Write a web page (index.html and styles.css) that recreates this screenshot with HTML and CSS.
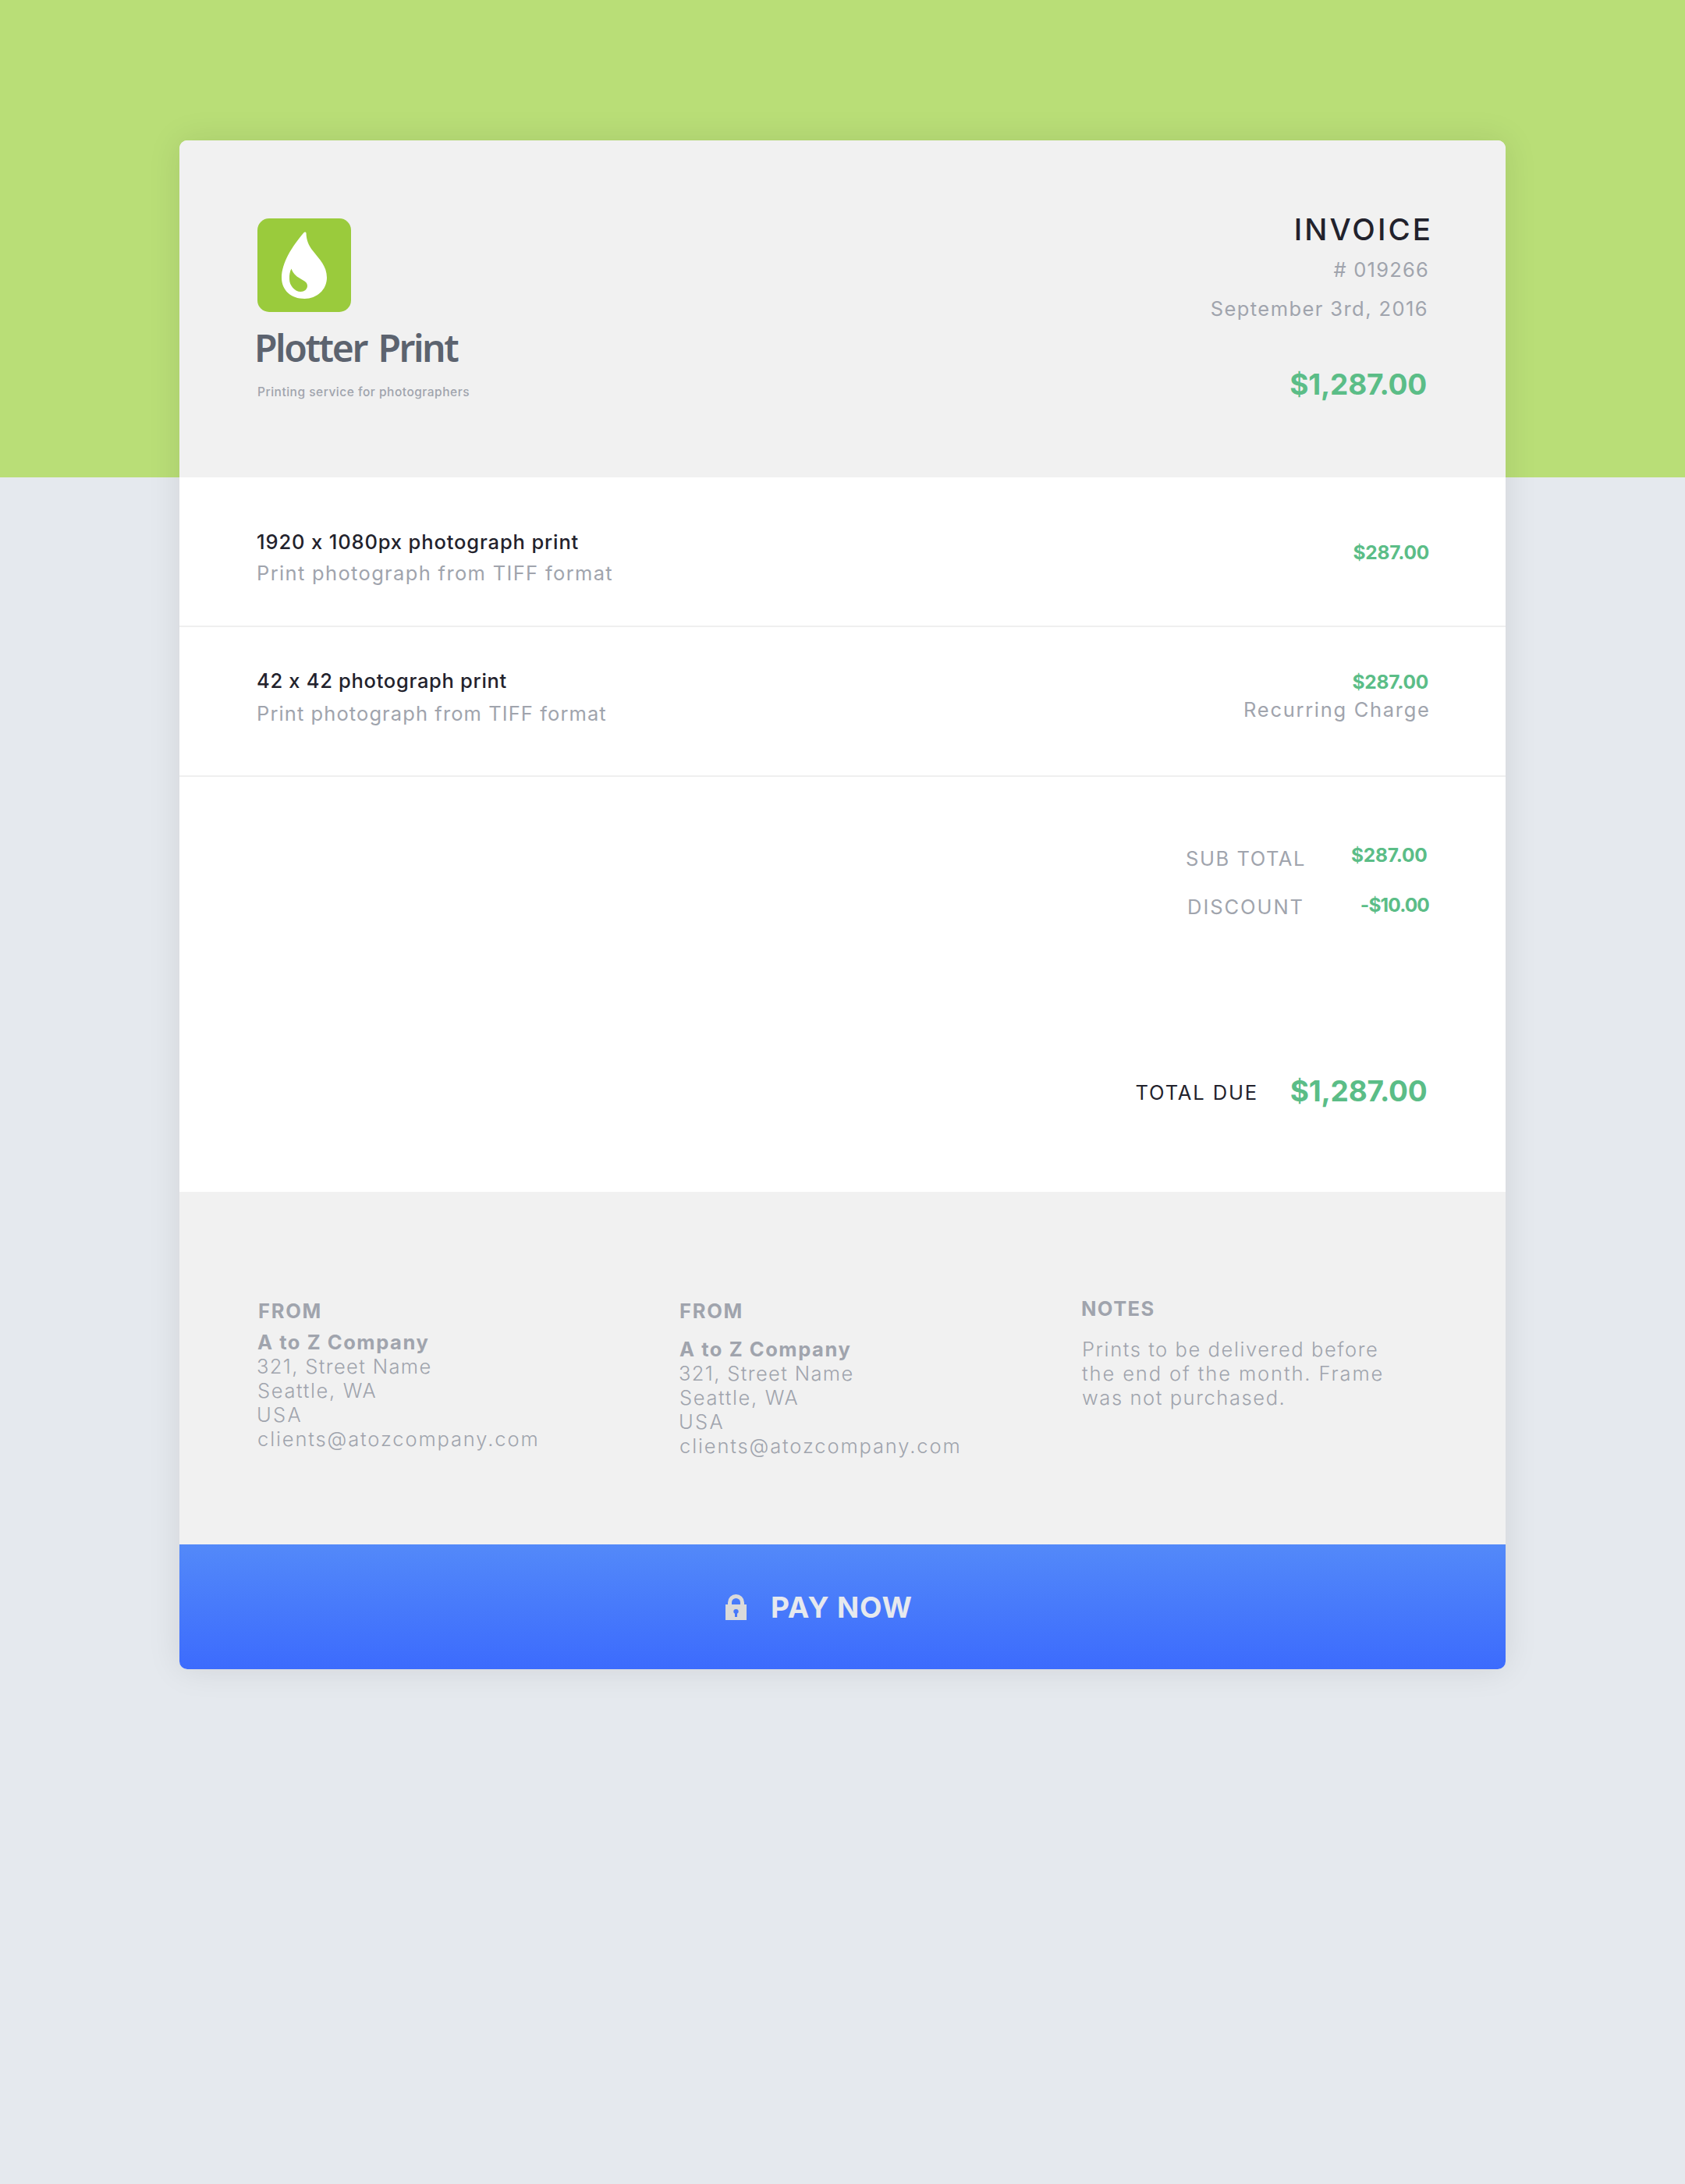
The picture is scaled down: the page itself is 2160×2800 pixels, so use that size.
FILE: index.html
```html
<!DOCTYPE html>
<html lang="en">
<head>
<meta charset="utf-8">
<title>Invoice 019266</title>
<link rel="stylesheet" href="styles.css">
</head>
<body>
<main class="invoice">
  <header class="header">
    <div class="brand">
      <svg class="logo" viewBox="0 0 120 120" aria-hidden="true">
        <rect width="120" height="120" rx="15" fill="#9acb3c"/>
        <path fill="#fff" d="M59.5 18.2C60.5 17 62.4 17.3 62.5 19C62.8 28 65.5 34.500 71 41.500C79.500 52.500 89 61 89 76C89 91.500 76 103 60.500 103C43 103 31 92 31 76C31 57 44.500 35.500 59.500 18.200Z"/>
        <path fill="#9acb3c" d="M43.500 64.500C46 72 51 75 58 79C62.500 81.500 64 83.500 64 86.500C64 91 60 94 55.500 94C48 94 41 86 41 78C40.800 73 41.300 68.500 43.500 64.500Z"/>
      </svg>
      <h1 class="brand-name">Plotter Print</h1>
      <p class="tagline">Printing service for photographers</p>
    </div>
    <div class="meta">
      <h2 class="meta-title">INVOICE</h2>
      <p class="text meta-number"># 019266</p>
      <p class="text meta-date">September 3rd, 2016</p>
      <p class="amount-large meta-amount">$1,287.00</p>
    </div>
  </header>

  <section class="item">
    <div class="item-info">
      <h3 class="item-title">1920 x 1080px photograph print</h3>
      <p class="text item-desc">Print photograph from TIFF format</p>
    </div>
    <div class="item-price item-price-single">
      <p class="amount">$287.00</p>
    </div>
  </section>

  <section class="item item-recurring">
    <div class="item-info">
      <h3 class="item-title">42 x 42 photograph print</h3>
      <p class="text item-desc">Print photograph from TIFF format</p>
    </div>
    <div class="item-price">
      <p class="amount">$287.00</p>
      <p class="text charge">Recurring Charge</p>
    </div>
  </section>

  <section class="totals">
    <div class="total-row subtotal">
      <span class="text total-label">SUB TOTAL</span>
      <span class="amount">$287.00</span>
    </div>
    <div class="total-row discount">
      <span class="text total-label">DISCOUNT</span>
      <span class="amount">-$10.00</span>
    </div>
    <div class="total-row due">
      <span class="text total-label">TOTAL DUE</span>
      <span class="amount-large">$1,287.00</span>
    </div>
  </section>

  <footer class="footer">
    <div class="party">
      <h4 class="heading">FROM</h4>
      <address class="address">
        <strong class="company">A to Z Company</strong>
        <span class="street">321, Street Name</span>
        <span class="city">Seattle, WA</span>
        <span class="country">USA</span>
        <span class="email">clients@atozcompany.com</span>
      </address>
    </div>
    <div class="party party-second">
      <h4 class="heading">FROM</h4>
      <address class="address">
        <strong class="company">A to Z Company</strong>
        <span class="street">321, Street Name</span>
        <span class="city">Seattle, WA</span>
        <span class="country">USA</span>
        <span class="email">clients@atozcompany.com</span>
      </address>
    </div>
    <div class="notes">
      <h4 class="heading">NOTES</h4>
      <p class="notes-text">Prints to be delivered before<br><span class="notes-wide">the end of the month. Frame</span><br>was not purchased.</p>
    </div>
  </footer>

  <button class="pay" type="button">
    <svg class="lock" viewBox="0 0 27 33" aria-hidden="true">
      <path fill="none" stroke="#dadada" stroke-width="5" d="M5.500 14V10.500a8 8 0 0 1 16 0V14"/>
      <path fill="#dadada" fill-rule="evenodd" d="M0 13H27V33H0ZM10.300 22C10.300 23.300 11 24.300 12 24.800V29H15V24.800C16 24.300 16.700 23.300 16.700 22A3.200 3 0 0 0 10.300 22Z"/>
    </svg>
    <span class="pay-label">PAY NOW</span>
  </button>
</main>
</body>
</html>
```
FILE: styles.css
```css
* {
  box-sizing: border-box;
  margin: 0;
  padding: 0;
}

body {
  min-height: 2800px;
  padding-top: 180px;
  background: linear-gradient(#b9de77 0 612px, #e5e9ee 612px);
  font-family: Inter, "Liberation Sans", sans-serif;
  white-space: nowrap;
}

.invoice {
  width: 1700px;
  margin: 0 auto;
  border-radius: 10px;
  background: #fff;
  box-shadow: 0 0 44px rgba(0, 0, 0, 0.095);
  overflow: hidden;
}

.text {
  color: #a0a4ad;
  font-size: 25.5px;
  font-weight: 400;
  line-height: 31px;
}

.amount {
  color: #5bbd87;
  font-size: 24.5px;
  font-weight: 700;
  line-height: 30px;
  letter-spacing: -0.22px;
}

.amount-large {
  color: #5bbd87;
  font-size: 37px;
  font-weight: 700;
  line-height: 45px;
  letter-spacing: -0.26px;
}

/* Header */

.header {
  display: flex;
  justify-content: space-between;
  height: 432px;
  padding: 91px 98px 0 100px;
  background: #f1f1f1;
}

.brand {
  padding-top: 9px;
}

.logo {
  display: block;
  width: 120px;
  height: 120px;
}

.brand-name {
  margin: 13px 0 0 -4px;
  color: #5c636f;
  font-family: "Noto Sans", sans-serif;
  font-size: 48px;
  font-weight: 600;
  line-height: 65px;
  letter-spacing: -2.4px;
  word-spacing: 4.5px;
}

.tagline {
  margin-top: 15px;
  color: #a0a4ad;
  font-size: 15.5px;
  font-weight: 500;
  line-height: 19px;
  letter-spacing: 0.51px;
}

.meta {
  display: flex;
  flex-direction: column;
  align-items: flex-end;
}

.meta-title {
  margin-right: -5px;
  color: #22222c;
  font-size: 38.5px;
  font-weight: 500;
  line-height: 46px;
  letter-spacing: 3.04px;
}

.meta-number {
  margin-top: 13px;
  letter-spacing: 1.22px;
}

.meta-date {
  margin: 19px 1px 0 0;
  letter-spacing: 1.42px;
}

.meta-amount {
  margin: 59px 3px 0 0;
}

/* Line items */

.item {
  display: flex;
  justify-content: space-between;
  height: 192px;
  padding: 67px 98px 0 99px;
  border-bottom: 2px solid #efefef;
}

.item-title {
  color: #22222c;
  font-size: 25.5px;
  font-weight: 500;
  line-height: 31px;
  letter-spacing: 0.87px;
}

.item-desc {
  margin-top: 9px;
  letter-spacing: 1.34px;
}

.item-price {
  display: flex;
  flex-direction: column;
  align-items: flex-end;
}

.item-price-single {
  padding: 14px 0 0;
}

.item-recurring {
  padding-top: 53px;
}

.item-recurring .item-title {
  letter-spacing: 0.7px;
}

.item-recurring .item-desc {
  margin-top: 11px;
  letter-spacing: 1.09px;
}

.item-recurring .amount {
  margin: 2px 1px 0 0;
}

.charge {
  margin: 5px -1.6px 0 0;
  letter-spacing: 1.7px;
}

/* Totals */

.totals {
  height: 532px;
  padding: 85px 98px 0 0;
}

.total-row {
  display: flex;
  justify-content: flex-end;
  align-items: flex-start;
}

.total-row .amount,
.total-row .amount-large {
  text-align: right;
}

.subtotal {
  height: 64px;
}

.subtotal .total-label {
  margin-top: 4px;
  letter-spacing: 1.56px;
}

.subtotal .amount {
  width: 158px;
  padding-right: 2.5px;
}

.discount {
  height: 231px;
}

.discount .total-label {
  margin-top: 2px;
  letter-spacing: 1.94px;
}

.discount .amount {
  width: 160px;
  letter-spacing: -0.89px;
}

.due .total-label {
  margin-top: 9px;
  color: #22222c;
  letter-spacing: 1.88px;
}

.due .amount-large {
  width: 219px;
  padding-right: 2.5px;
}

/* Footer */

.footer {
  display: grid;
  grid-template-columns: 540px 516px 1fr;
  height: 452px;
  padding: 137px 98px 0 100px;
  background: #f1f1f1;
  color: #a0a4ad;
  font-size: 25.5px;
  font-weight: 300;
  line-height: 31px;
}

.heading {
  padding-left: 1px;
  font-size: 25.5px;
  font-weight: 700;
  letter-spacing: 1.71px;
}

.address {
  display: flex;
  flex-direction: column;
  margin-top: 9px;
  font-style: normal;
}

.party-second .address {
  margin: 18px 0 0 1px;
}

.company {
  font-weight: 700;
  letter-spacing: 1.56px;
}

.street {
  margin-left: -1px;
  letter-spacing: 1.37px;
}

.city {
  letter-spacing: 1.64px;
}

.country {
  margin-left: -1px;
  letter-spacing: 2.31px;
}

.email {
  letter-spacing: 1.87px;
}

.notes {
  margin-top: -3px;
}

.notes .heading {
  padding-left: 0;
  letter-spacing: 1.43px;
}

.notes-text {
  margin: 21px 0 0 1px;
  letter-spacing: 1.58px;
}

.notes-wide {
  letter-spacing: 1.89px;
}

/* Pay button */

.pay {
  display: flex;
  align-items: flex-start;
  width: 100%;
  height: 160px;
  padding: 58px 0 0 700px;
  border: 0;
  background: linear-gradient(#5389f9, #3c6bfd);
  font-family: inherit;
}

.lock {
  width: 27px;
  height: 33px;
  margin-top: 6px;
}

.pay-label {
  margin-left: 31px;
  color: #e6e9ee;
  font-size: 37px;
  font-weight: 700;
  line-height: 45px;
  letter-spacing: 0.88px;
}
```
